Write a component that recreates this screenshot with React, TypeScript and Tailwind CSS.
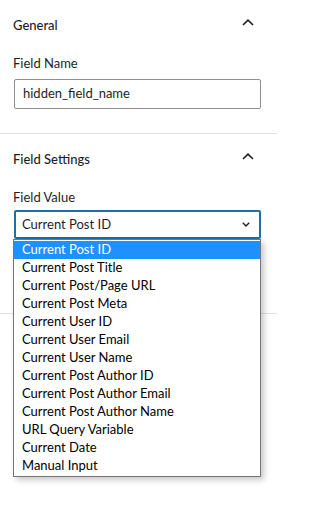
const options = [
  "Current Post ID",
  "Current Post Title",
  "Current Post/Page URL",
  "Current Post Meta",
  "Current User ID",
  "Current User Email",
  "Current User Name",
  "Current Post Author ID",
  "Current Post Author Email",
  "Current Post Author Name",
  "URL Query Variable",
  "Current Date",
  "Manual Input",
];

function ChevronUp() {
  return (
    <svg width="12" height="7" viewBox="0 0 12 7" className="mr-[7px] mt-[-3px]">
      <path d="M1 6 L6 1.2 L11 6" fill="none" stroke="#1e1e1e" strokeWidth="1.6" />
    </svg>
  );
}

function ChevronDown() {
  return (
    <svg width="8" height="5" viewBox="0 0 8 5">
      <path d="M0.8 0.8 L4 4 L7.2 0.8" fill="none" stroke="#1e1e1e" strokeWidth="1.4" />
    </svg>
  );
}

export default function App() {
  return (
    <div className="relative min-h-[506px] w-[277px] bg-white text-[#1e1e1e] font-['Lato','Noto_Sans',sans-serif]">
      {/* General */}
      <section className="border-b border-[#e0e0e0] pl-[14px] pr-[16px] pb-[24px]">
        <div className="flex h-12 items-center justify-between">
          <span className="-ml-px mt-[3px] text-[13px] font-medium">General</span>
          <ChevronUp />
        </div>
        <label className="-ml-px mt-[7px] block text-[13px] leading-[16px]">Field Name</label>
        <div className="mt-[8px] flex h-[30px] items-center rounded-[2px] border border-[#8c8f94] px-[8px] text-[13px]">
          hidden_field_name
        </div>
      </section>

      {/* Field Settings */}
      <section className="h-[180px] border-b border-[#e0e0e0] pl-[14px] pr-[16px]">
        <div className="flex h-12 items-center justify-between">
          <span className="-ml-px mt-[3px] text-[13px] font-medium">Field Settings</span>
          <ChevronUp />
        </div>
        <label className="-ml-px mt-[7px] block text-[13px] leading-[16px]">Field Value</label>
        <div className="relative mt-[5px]">
          <div className="flex h-[29px] items-center justify-between rounded-[2px] border-2 border-[#1f6fa5] pl-[6px] pr-[9px] text-[13px]">
            <span>Current Post ID</span>
            <ChevronDown />
          </div>
          <ul className="absolute left-[-1px] top-[29px] z-10 w-[248px] border border-[#767676] bg-white py-px shadow-[3px_3px_6px_rgba(0,0,0,0.22)]">
            {options.map((o, i) => (
              <li
                key={o}
                className={
                  i === 0
                    ? "flex h-[18px] items-center bg-[#1e90ff] pl-[8px] text-[13px] text-white"
                    : "flex h-[18px] items-center pl-[8px] text-[13px] text-black"
                }
              >
                {o}
              </li>
            ))}
          </ul>
        </div>
      </section>
    </div>
  );
}
